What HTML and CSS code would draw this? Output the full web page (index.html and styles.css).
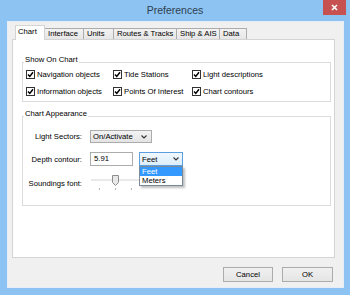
FILE: index.html
```html
<!DOCTYPE html>
<html lang="en">
<head>
    <meta charset="UTF-8">
    <title>Preferences</title>
    <link rel="stylesheet" href="styles.css">
</head>
<body>
    <div class="window">
        <!-- title bar -->
        <div class="titlebar">
            <div class="title">Preferences</div>
            <div class="close">
                <svg width="7" height="7" viewBox="0 0 7 7"><path d="M1 1L6 6M6 1L1 6" stroke="#fff" stroke-width="1.6" fill="none"/></svg>
            </div>
        </div>

        <div class="client">
            <div class="tabs">
                <div class="tab active tab-chart">Chart</div>
                <div class="tab tab-interface">Interface</div>
                <div class="tab tab-units">Units</div>
                <div class="tab tab-routes">Routes &amp; Tracks</div>
                <div class="tab tab-ship">Ship &amp; AIS</div>
                <div class="tab tab-data">Data</div>
            </div>

            <div class="panel">
                <!-- Show On Chart -->
                <div class="group group-show">
                    <div class="group-title">Show On Chart</div>
                    <div class="check-grid">
                        <label class="check-item"><span class="check"><svg width="7" height="7" viewBox="0 0 7 7"><path d="M1 3.4L2.8 5.4L6 1.2" stroke="#000" stroke-width="1.5" fill="none"/></svg></span>Navigation objects</label>
                        <label class="check-item"><span class="check"><svg width="7" height="7" viewBox="0 0 7 7"><path d="M1 3.4L2.8 5.4L6 1.2" stroke="#000" stroke-width="1.5" fill="none"/></svg></span>Tide Stations</label>
                        <label class="check-item"><span class="check"><svg width="7" height="7" viewBox="0 0 7 7"><path d="M1 3.4L2.8 5.4L6 1.2" stroke="#000" stroke-width="1.5" fill="none"/></svg></span>Light descriptions</label>
                        <label class="check-item"><span class="check"><svg width="7" height="7" viewBox="0 0 7 7"><path d="M1 3.4L2.8 5.4L6 1.2" stroke="#000" stroke-width="1.5" fill="none"/></svg></span>Information objects</label>
                        <label class="check-item"><span class="check"><svg width="7" height="7" viewBox="0 0 7 7"><path d="M1 3.4L2.8 5.4L6 1.2" stroke="#000" stroke-width="1.5" fill="none"/></svg></span>Points Of Interest</label>
                        <label class="check-item"><span class="check"><svg width="7" height="7" viewBox="0 0 7 7"><path d="M1 3.4L2.8 5.4L6 1.2" stroke="#000" stroke-width="1.5" fill="none"/></svg></span>Chart contours</label>
                    </div>
                </div>

                <!-- Chart Appearance -->
                <div class="group group-appearance">
                    <div class="group-title">Chart Appearance</div>
                    <div class="form-grid">
                        <div class="form-label">Light Sectors:</div>
                        <div class="controls">
                            <div class="combo combo-sectors">
                                <span>On/Activate</span>
                                <svg width="6" height="4" viewBox="0 0 6 4"><path d="M0.5 0.5L3 3L5.5 0.5" stroke="#333" stroke-width="1.1" fill="none"/></svg>
                            </div>
                        </div>

                        <div class="form-label">Depth contour:</div>
                        <div class="controls">
                            <div class="textbox">5.91</div>
                            <div class="combo-wrap">
                                <div class="combo combo-open">
                                    <span>Feet</span>
                                    <svg width="6" height="4" viewBox="0 0 6 4"><path d="M0.5 0.5L3 3L5.5 0.5" stroke="#333" stroke-width="1.1" fill="none"/></svg>
                                </div>
                                <div class="dropdown">
                                    <div class="dropdown-item selected">Feet</div>
                                    <div class="dropdown-item">Meters</div>
                                </div>
                            </div>
                        </div>

                        <div class="form-label">Soundings font:</div>
                        <div class="controls">
                            <svg class="slider" width="60" height="16" viewBox="0 0 60 16">
                                <rect x="1" y="4" width="57" height="2" fill="#e9e9e9"/>
                                <path d="M22.5 0.5H28.5V7.5L25.5 10.5L22.5 7.5Z" fill="#e8e8e8" stroke="#8d8d8d"/>
                                <path d="M9.5 13V15M25.5 13V15M41.5 13V15" stroke="#b5b5b5"/>
                            </svg>
                        </div>
                    </div>
                </div>
            </div>

            <div class="buttons">
                <button class="btn btn-cancel">Cancel</button>
                <button class="btn btn-ok">OK</button>
            </div>
        </div>
    </div>
</body>
</html>
```

FILE: styles.css
```css
* {
    box-sizing: border-box;
}

body {
    margin: 0;
    font-family: "Liberation Sans", Arial, sans-serif;
    font-size: 7.7px;
    color: #000;
}

.window {
    width: 350px;
    height: 295px;
    background: #8cc3f2;
    display: flex;
    flex-direction: column;
}

.titlebar {
    height: 21px;
    display: flex;
    align-items: flex-start;
    padding-left: 27px;
}

.title {
    flex: 1;
    text-align: center;
    font-size: 10.5px;
    line-height: 21px;
    color: #2f3f50;
}

.close {
    width: 23px;
    height: 15px;
    margin-right: 4px;
    background: #c75050;
    display: flex;
    align-items: center;
    justify-content: center;
}

.client {
    flex: 1;
    margin: 0 6px 7px 7px;
    background: #f0f0f0;
    border: 1px solid #e4eef8;
    padding: 3px 8px 0 4px;
}

/* tabs */
.tabs {
    height: 14px;
    display: flex;
    align-items: flex-end;
    padding-left: 3px;
}

.tab {
    height: 11px;
    line-height: 10px;
    padding-left: 3px;
    margin-left: -1px;
    border: 1px solid #acacac;
    border-bottom: none;
    background: linear-gradient(#f2f2f2, #e6e6e6);
    white-space: nowrap;
}

.tab.active {
    height: 15px;
    line-height: 12px;
    margin-left: 0;
    margin-bottom: -1px;
    padding-left: 2px;
    background: #fff;
    border-color: #d4d4d4;
    position: relative;
    z-index: 1;
}

.tab-chart { width: 30px; }
.tab-interface { width: 40px; }
.tab-units { width: 31px; }
.tab-routes { width: 64px; }
.tab-ship { width: 44px; }
.tab-data { width: 28px; }

.panel {
    height: 219px;
    background: #fff;
    border: 1px solid #d4d4d4;
    padding-top: 1px;
}

/* group boxes */
.group {
    border: 1px solid #dcdcdc;
    margin: 21px 3px 0 9px;
}

.group-title {
    width: fit-content;
    margin: -8px 0 0 1px;
    padding: 0 1px;
    line-height: 9px;
    background: #fff;
}

.group-show {
    padding-bottom: 5px;
}

.check-grid {
    display: grid;
    grid-template-columns: 87px 79px auto;
    grid-auto-rows: 10px;
    row-gap: 7px;
    margin-top: 5px;
    padding-left: 3px;
}

.check-item {
    display: flex;
    align-items: center;
    gap: 2px;
    white-space: nowrap;
}

.check {
    width: 9px;
    height: 9px;
    border: 1px solid #333;
    background: #fff;
    display: flex;
    align-items: center;
    justify-content: center;
}

.group-appearance {
    margin-top: 14px;
    padding-bottom: 14px;
}

.form-grid {
    display: grid;
    grid-template-columns: 59px auto;
    grid-template-rows: 13px 14px 16px;
    column-gap: 8px;
    row-gap: 9px;
    margin-top: 12px;
}

.form-label {
    text-align: right;
    white-space: nowrap;
    display: flex;
    align-items: center;
    justify-content: flex-end;
}

.controls {
    display: flex;
    align-items: flex-start;
}

.combo {
    height: 13px;
    display: flex;
    align-items: center;
    justify-content: space-between;
    padding: 0 4px 0 2px;
    border: 1px solid #acacac;
    background: linear-gradient(#f3f3f3, #e3e3e3);
}

.combo-sectors {
    width: 62px;
}

.textbox {
    width: 43px;
    height: 14px;
    line-height: 12px;
    padding-left: 3px;
    border: 1px solid #acacac;
    background: #fff;
}

.combo-wrap {
    position: relative;
    margin-left: 6px;
}

.combo-open {
    width: 44px;
    height: 14px;
    padding-right: 3px;
    border-color: #5b9fdf;
    background: linear-gradient(#f1f8fe, #dceefc);
}

.dropdown {
    position: absolute;
    top: 14px;
    left: 0;
    width: 44px;
    border: 1px solid #7a8a9a;
    background: #fff;
    box-shadow: 2px 2px 2px rgba(0, 0, 0, 0.25);
    z-index: 2;
}

.dropdown-item {
    height: 9px;
    line-height: 9px;
    padding-left: 2px;
}

.dropdown-item.selected {
    background: #3399ff;
    color: #fff;
}

.slider {
    display: block;
}

/* bottom buttons */
.buttons {
    display: flex;
    justify-content: flex-end;
    gap: 9px;
    margin-top: 9px;
    padding-right: 2px;
}

.btn {
    height: 15px;
    padding: 0;
    font-family: "Liberation Sans", Arial, sans-serif;
    font-size: 7.7px;
    color: #000;
    border: 1px solid #acacac;
    background: linear-gradient(#f0f0f0, #e5e5e5);
}

.btn-cancel { width: 50px; }
.btn-ok { width: 51px; }
```
